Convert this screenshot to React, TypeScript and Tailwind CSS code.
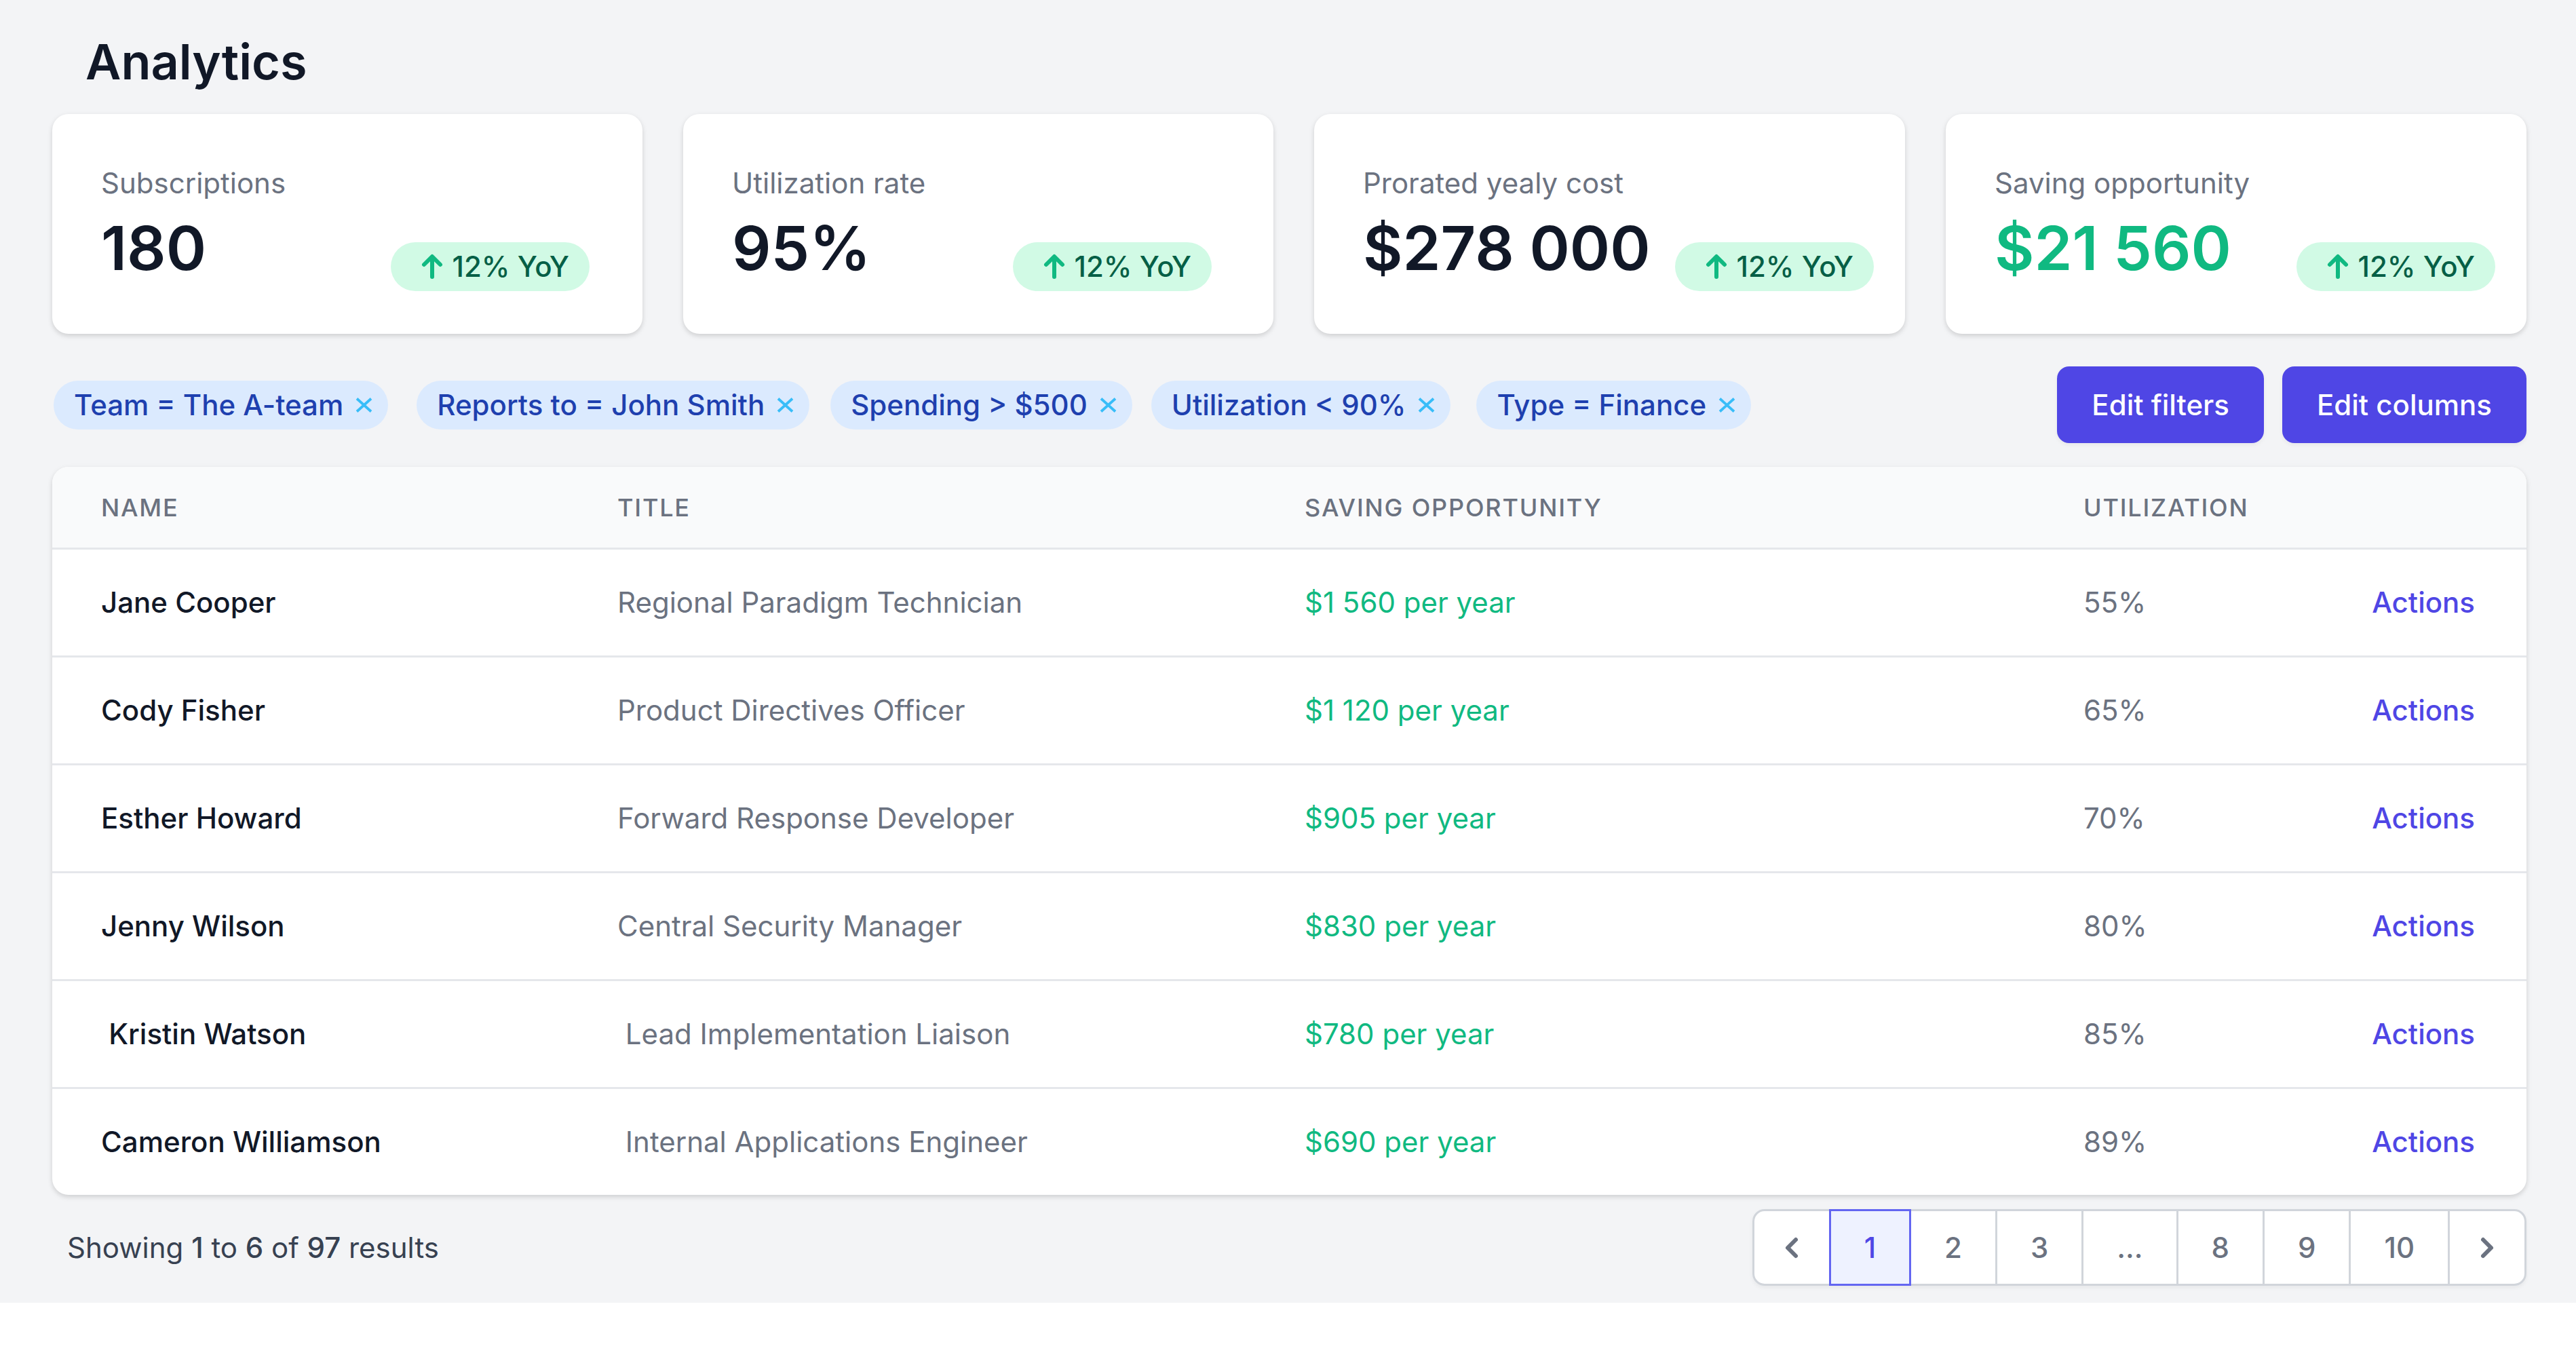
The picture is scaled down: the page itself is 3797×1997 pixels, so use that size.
import React from "react";

const cards = [
  { label: "Subscriptions", value: "180", valueCls: "text-[#111827]", badgeCls: "mr-[6px]" },
  { label: "Utilization rate", value: "95%", valueCls: "text-[#111827]", badgeCls: "mr-[19px]" },
  { label: "Prorated yealy cost", value: "$278 000", valueCls: "text-[#111827]", badgeCls: "-mr-[26px]" },
  { label: "Saving opportunity", value: "$21 560", valueCls: "text-[#10b981]", badgeCls: "-mr-[26px]" },
];

const filters = [
  { text: "Team = The A-team", cls: "" },
  { text: "Reports to = John Smith", cls: "ml-[42px]" },
  { text: "Spending > $500", cls: "ml-[31px]" },
  { text: "Utilization < 90%", cls: "ml-[28px]" },
  { text: "Type = Finance", cls: "ml-[38px]" },
];

const rows = [
  { name: "Jane Cooper", title: "Regional Paradigm Technician", saving: "$1 560 per year", util: "55%" },
  { name: "Cody Fisher", title: "Product Directives Officer", saving: "$1 120 per year", util: "65%" },
  { name: "Esther Howard", title: "Forward Response Developer", saving: "$905 per year", util: "70%" },
  { name: "Jenny Wilson", title: "Central Security Manager", saving: "$830 per year", util: "80%" },
  { name: "\u00a0Kristin Watson", title: "\u00a0Lead Implementation Liaison", saving: "$780 per year", util: "85%" },
  { name: "Cameron Williamson", title: "\u00a0Internal Applications Engineer", saving: "$690 per year", util: "89%" },
];

const pages = ["1", "2", "3", "...", "8", "9", "10"];

function ArrowUp() {
  return (
    <svg viewBox="0 0 20 20" fill="currentColor" className="w-[60px] h-[60px] shrink-0 text-[#10b981]">
      <path
        fillRule="evenodd"
        d="M5.293 9.707a1 1 0 010-1.414l4-4a1 1 0 011.414 0l4 4a1 1 0 01-1.414 1.414L11 7.414V15a1 1 0 11-2 0V7.414L6.707 9.707a1 1 0 01-1.414 0z"
        clipRule="evenodd"
      />
    </svg>
  );
}

function XIcon() {
  return (
    <svg viewBox="0 0 25 22" className="w-[25px] h-[22px] ml-[18px] text-[#38bdf8]" fill="none" stroke="currentColor">
      <path d="M2 1.5L23 20.5M23 1.5L2 20.5" strokeWidth="3.8" />
    </svg>
  );
}

function Chevron({ dir }: { dir: "left" | "right" }) {
  return (
    <svg viewBox="0 0 20 20" fill="currentColor" className="w-[60px] h-[60px]">
      {dir === "left" ? (
        <path
          fillRule="evenodd"
          d="M12.707 5.293a1 1 0 010 1.414L9.414 10l3.293 3.293a1 1 0 01-1.414 1.414l-4-4a1 1 0 010-1.414l4-4a1 1 0 011.414 0z"
          clipRule="evenodd"
        />
      ) : (
        <path
          fillRule="evenodd"
          d="M7.293 14.707a1 1 0 010-1.414L10.586 10 7.293 6.707a1 1 0 011.414-1.414l4 4a1 1 0 010 1.414l-4 4a1 1 0 01-1.414 0z"
          clipRule="evenodd"
        />
      )}
    </svg>
  );
}

export default function App() {
  return (
    <div className="w-[3797px] bg-[#f3f4f6] font-['Inter',_'Noto_Sans',_sans-serif] pl-[77px] pr-[73px] pt-[43px] pb-[25px]">
      <h1 className="pl-[49px] text-[72px] leading-[96px] font-semibold text-[#111827]">Analytics</h1>

      <div className="mt-[29px] grid grid-cols-[870px_870px_871px_1fr] gap-x-[60px]">
        {cards.map((c) => (
          <div
            key={c.label}
            className="bg-white rounded-[24px] px-[72px] py-[72px] shadow-[0_3px_9px_0_rgba(0,0,0,0.1),0_3px_6px_0_rgba(0,0,0,0.06)]"
          >
            <div className="text-[42px] leading-[60px] text-[#6b7280]">{c.label}</div>
            <div className="mt-[12px] h-[108px] flex items-start justify-between">
              <div className={`text-[90px] leading-[108px] font-semibold ${c.valueCls}`}>{c.value}</div>
              <div
                className={`mt-[45px] flex shrink-0 items-center h-[72px] rounded-full bg-[#d1fae5] pl-[31px] pr-[30px] ${c.badgeCls}`}
              >
                <ArrowUp />
                <span className="text-[42px] leading-[60px] font-medium text-[#065f46]">12% YoY</span>
              </div>
            </div>
          </div>
        ))}
      </div>

      <div className="mt-[48px] flex items-center justify-between h-[113px]">
        <div className="flex items-center pl-[2px]">
          {filters.map((f) => (
            <span
              key={f.text}
              className={`inline-flex items-center h-[72px] rounded-full bg-[#dbeafe] pl-[30px] pr-[23px] text-[42px] leading-[60px] font-medium text-[#1e40af] whitespace-pre ${f.cls}`}
            >
              {f.text}
              <XIcon />
            </span>
          ))}
        </div>
        <div className="flex items-center gap-x-[27px]">
          <button className="h-[113px] px-[51px] rounded-[18px] bg-[#4f46e5] text-white text-[42px] leading-[60px] font-medium shadow-[0_3px_6px_0_rgba(0,0,0,0.05)]">
            Edit filters
          </button>
          <button className="h-[113px] px-[51px] rounded-[18px] bg-[#4f46e5] text-white text-[42px] leading-[60px] font-medium shadow-[0_3px_6px_0_rgba(0,0,0,0.05)]">
            Edit columns
          </button>
        </div>
      </div>

      <div className="mt-[35px] bg-white rounded-[24px] overflow-hidden shadow-[0_3px_9px_0_rgba(0,0,0,0.1),0_3px_6px_0_rgba(0,0,0,0.06)]">
        <div className="box-content grid grid-cols-[761px_1013px_1148px_1fr_auto] items-center h-[119px] bg-[#f9fafb] border-b-[3px] border-[#e5e7eb] text-[36px] leading-[48px] font-medium uppercase tracking-[0.05em] text-[#6b7280]">
          <div className="pl-[72px]">Name</div>
          <div className="pl-[72px]">Title</div>
          <div className="pl-[72px]">Saving opportunity</div>
          <div className="pl-[72px]">Utilization</div>
          <div className="pr-[76px]"></div>
        </div>
        {rows.map((r, i) => (
          <div
            key={r.name}
            className={`box-content grid grid-cols-[761px_1013px_1148px_1fr_auto] items-center h-[156px] text-[42px] leading-[60px] whitespace-pre ${
              i > 0 ? "border-t-[3px] border-[#e5e7eb]" : ""
            }`}
          >
            <div className="pl-[72px] font-medium text-[#111827]">{r.name}</div>
            <div className="pl-[72px] text-[#6b7280]">{r.title}</div>
            <div className="pl-[72px] text-[#10b981]">{r.saving}</div>
            <div className="pl-[72px] text-[#6b7280]">{r.util}</div>
            <div className="pr-[76px] text-right font-medium text-[#4f46e5]">Actions</div>
          </div>
        ))}
      </div>

      <div className="mt-[21px] flex items-center justify-between">
        <p className="pl-[22px] text-[42px] leading-[60px] text-[#374151]">
          Showing <span className="font-medium">1</span> to <span className="font-medium">6</span> of{" "}
          <span className="font-medium">97</span> results
        </p>
        <nav className="inline-flex rounded-[18px] shadow-[0_3px_6px_0_rgba(0,0,0,0.05)]">
          <button className="flex items-center h-[113px] px-[25px] rounded-l-[18px] border-[3px] border-[#d1d5db] bg-white text-[#6b7280]">
            <Chevron dir="left" />
          </button>
          {pages.map((p) => (
            <button
              key={p}
              className={
                p === "1"
                  ? "relative z-10 -ml-[3px] h-[113px] px-[49px] border-[3px] border-[#6366f1] bg-[#eef2ff] text-[42px] leading-[60px] font-medium text-[#4f46e5]"
                  : "-ml-[3px] h-[113px] px-[49px] border-[3px] border-[#d1d5db] bg-white text-[42px] leading-[60px] font-medium text-[#6b7280]"
              }
            >
              {p}
            </button>
          ))}
          <button className="-ml-[3px] flex items-center h-[113px] px-[25px] rounded-r-[18px] border-[3px] border-[#d1d5db] bg-white text-[#6b7280]">
            <Chevron dir="right" />
          </button>
        </nav>
      </div>
    </div>
  );
}
